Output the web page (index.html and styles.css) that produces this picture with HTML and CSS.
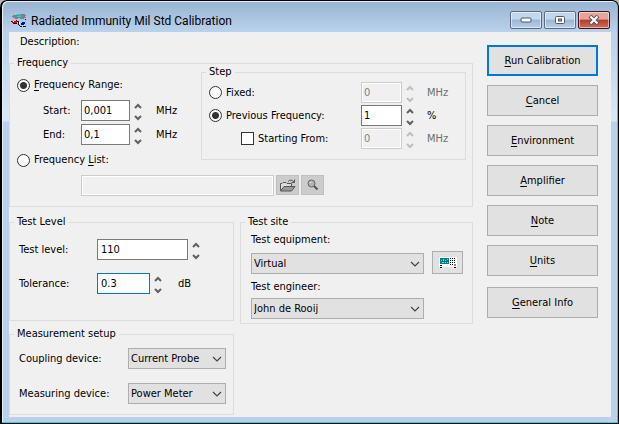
FILE: index.html
```html
<!DOCTYPE html>
<html lang="en">
<head>
  <meta charset="UTF-8">
  <meta name="viewport" content="width=device-width, initial-scale=1.0">
  <title>Radiated Immunity Mil Std Calibration</title>
  <link rel="stylesheet" href="styles.css">
</head>
<body>
  <svg class="defs" width="0" height="0" aria-hidden="true">
    <symbol id="up" viewBox="0 0 8 7"><path d="M1 5L4 2L7 5" fill="none" stroke="currentColor" stroke-width="2"/></symbol>
    <symbol id="down" viewBox="0 0 8 7"><path d="M1 2L4 5L7 2" fill="none" stroke="currentColor" stroke-width="2"/></symbol>
    <symbol id="chevron" viewBox="0 0 10 6"><path d="M1 1L5 5L9 1" fill="none" stroke="currentColor" stroke-width="1.2"/></symbol>
  </svg>

  <div class="window">
    <header class="titlebar">
      <svg class="app-icon" width="16" height="16" viewBox="0 0 16 16" shape-rendering="crispEdges" aria-hidden="true">
        <path d="M2 2h3v-1h9v1h1v1h-1v1h1v1h-2v1h-4v-1h-2v1h-3v-1h-2v-1h-1v-1h1z" fill="#808080"/>
        <path d="M5 1h4v1h-4zM9 2h1v2h-1zM6 3h3v1h-3z" fill="#00e5ee"/>
        <path d="M1 8h5v2h-5z" fill="#f00000"/>
        <path d="M0 8h1v1h-1zM5 7h1v1h-1zM6 8h2v1h-2zM7 9h1v3h-1zM8 12h1v1h-1zM2 10h4v1h-4zM9 13h2v1h-2zM12 13h3v1h-3zM14 6h1v1h-1z" fill="#101010"/>
        <path d="M10 10h1v-1h3v2h-1v1h-3z" fill="#0000f0"/>
        <path d="M2 8h1v1h-1zM8 9h1v2h-1z" fill="#ffffff"/>
      </svg>
      <h1>Radiated Immunity Mil Std Calibration</h1>
      <div class="caption">
        <button type="button" aria-label="Minimize">
          <svg width="12" height="6" viewBox="0 0 12 6"><rect x="1" y="1" width="10" height="4" rx="1" fill="#fff" stroke="#535666"/></svg>
        </button>
        <button type="button" aria-label="Maximize">
          <svg width="12" height="10" viewBox="0 0 12 10"><rect x="1.5" y="1.5" width="9" height="7" rx="1" fill="#fff" stroke="#535666"/><rect x="4.5" y="4" width="3" height="2" fill="#8fb0d0" stroke="#535666"/></svg>
        </button>
        <button type="button" class="close" aria-label="Close">
          <svg width="12" height="10" viewBox="0 0 12 10"><path d="M2 1L10 9M10 1L2 9" stroke="#535666" stroke-width="4"/><path d="M2.5 1.5L9.5 8.5M9.5 1.5L2.5 8.5" stroke="#fff" stroke-width="2"/></svg>
        </button>
      </div>
    </header>

    <form class="client">
      <div class="main">
        <p class="description">Description:</p>

        <fieldset class="group frequency">
          <legend>Frequency</legend>
          <div class="range">
            <label class="choice"><input type="radio" name="freq" checked><span><u>F</u>requency Range:</span></label>
            <div class="limits">
              <label for="start">Start:</label>
              <div class="spin">
                <input class="field" id="start" type="text" value="0,001">
                <span class="arrows">
                  <button type="button" aria-label="Start up"><svg><use href="#up"/></svg></button>
                  <button type="button" aria-label="Start down"><svg><use href="#down"/></svg></button>
                </span>
              </div>
              <span>MHz</span>
              <label for="end">End:</label>
              <div class="spin">
                <input class="field" id="end" type="text" value="0,1">
                <span class="arrows">
                  <button type="button" aria-label="End up"><svg><use href="#up"/></svg></button>
                  <button type="button" aria-label="End down"><svg><use href="#down"/></svg></button>
                </span>
              </div>
              <span>MHz</span>
            </div>
            <label class="choice"><input type="radio" name="freq"><span>Frequency <u>L</u>ist:</span></label>
          </div>

          <fieldset class="group step">
            <legend>Step</legend>
            <label class="choice"><input type="radio" name="step"><span>Fixed:</span></label>
            <div class="spin">
              <input class="field" type="text" value="0" aria-label="Fixed step" disabled>
              <span class="arrows">
                <button type="button" aria-label="Fixed up" disabled><svg><use href="#up"/></svg></button>
                <button type="button" aria-label="Fixed down" disabled><svg><use href="#down"/></svg></button>
              </span>
            </div>
            <span class="off">MHz</span>
            <label class="choice"><input type="radio" name="step" checked><span>Previous Frequency:</span></label>
            <div class="spin">
              <input class="field" type="text" value="1" aria-label="Previous frequency step">
              <span class="arrows">
                <button type="button" aria-label="Step up"><svg><use href="#up"/></svg></button>
                <button type="button" aria-label="Step down"><svg><use href="#down"/></svg></button>
              </span>
            </div>
            <span>%</span>
            <label class="choice sub"><input type="checkbox"><span>Starting From:</span></label>
            <div class="spin">
              <input class="field" type="text" value="0" aria-label="Starting from" disabled>
              <span class="arrows">
                <button type="button" aria-label="Starting from up" disabled><svg><use href="#up"/></svg></button>
                <button type="button" aria-label="Starting from down" disabled><svg><use href="#down"/></svg></button>
              </span>
            </div>
            <span class="off">MHz</span>
          </fieldset>

          <div class="file">
            <input class="field" type="text" aria-label="Frequency list file" disabled>
            <button type="button" class="tool" aria-label="Open" disabled>
              <svg width="17" height="13" viewBox="0 0 17 13"><path d="M1.5 11.5V4.5H3L4 3.5H7L8 4.5H12.5V7" fill="#ddd" stroke="#555"/><path d="M1.5 12L5 7.5H16L12.5 12z" fill="#999" stroke="#555"/><path d="M9 2.5Q12 -0.5 15 3M15.5 0.5V3.5H12.5" fill="none" stroke="#555"/></svg>
            </button>
            <button type="button" class="tool" aria-label="Search" disabled>
              <svg width="12" height="12" viewBox="0 0 12 12"><circle cx="4.5" cy="4.5" r="3.5" fill="#b4b4b4" stroke="#666"/><path d="M3 4Q3 3 4.5 3" fill="none" stroke="#eee"/><path d="M7 7L10.5 10.5" stroke="#555" stroke-width="2"/></svg>
            </button>
          </div>
        </fieldset>

        <div class="columns">
          <div class="column">
            <fieldset class="group level">
              <legend>Test Level</legend>
              <label for="level">Test level:</label>
              <div class="spin wide">
                <input class="field" id="level" type="text" value="110">
                <span class="arrows">
                  <button type="button" aria-label="Level up"><svg><use href="#up"/></svg></button>
                  <button type="button" aria-label="Level down"><svg><use href="#down"/></svg></button>
                </span>
              </div>
              <label for="tolerance">Tolerance:</label>
              <div class="spin">
                <input class="field active" id="tolerance" type="text" value="0.3">
                <span class="arrows">
                  <button type="button" aria-label="Tolerance up"><svg><use href="#up"/></svg></button>
                  <button type="button" aria-label="Tolerance down"><svg><use href="#down"/></svg></button>
                </span>
                <span class="unit">dB</span>
              </div>
            </fieldset>

            <fieldset class="group setup">
              <legend>Measurement setup</legend>
              <label for="coupling">Coupling device:</label>
              <div class="select"><select id="coupling"><option>Current Probe</option></select><svg><use href="#chevron"/></svg></div>
              <label for="measuring">Measuring device:</label>
              <div class="select"><select id="measuring"><option>Power Meter</option></select><svg><use href="#chevron"/></svg></div>
            </fieldset>
          </div>

          <fieldset class="group site">
            <legend>Test site</legend>
            <label for="equipment">Test equipment:</label>
            <div class="select"><select id="equipment"><option>Virtual</option></select><svg><use href="#chevron"/></svg></div>
            <button type="button" class="push device" aria-label="Equipment">
              <svg width="18" height="12" viewBox="0 0 18 12" shape-rendering="crispEdges">
                <path d="M0 0h18v10h-18z" fill="#fff"/>
                <path d="M1 1h9v6h-9z" fill="#008080"/>
                <path d="M2 3h1v1h-1zM4 2h1v2h-1zM6 3h1v1h-1zM8 2h1v1h-1zM3 5h2v1h-2zM6 5h1v1h-1zM8 5h1v1h-1z" fill="#00ffff"/>
                <path d="M11 1h1v1h-1zM13 1h1v1h-1zM15 1h1v1h-1zM11 3h1v1h-1zM13 3h1v1h-1zM15 3h1v1h-1zM11 5h1v1h-1zM13 5h1v1h-1zM15 5h1v1h-1zM11 7h1v1h-1zM13 7h1v1h-1zM1 10h2v1h-2zM15 10h2v1h-2z" fill="#000"/>
                <path d="M1 8h2v1h-2z" fill="#000080"/>
                <path d="M15 7h2v2h-2z" fill="#888"/>
              </svg>
            </button>
            <label for="engineer">Test engineer:</label>
            <div class="select"><select id="engineer"><option>John de Rooij</option></select><svg><use href="#chevron"/></svg></div>
          </fieldset>
        </div>
      </div>

      <div class="actions">
        <button type="button" class="push default"><u>R</u>un Calibration</button>
        <button type="button" class="push"><u>C</u>ancel</button>
        <button type="button" class="push"><u>E</u>nvironment</button>
        <button type="button" class="push"><u>A</u>mplifier</button>
        <button type="button" class="push"><u>N</u>ote</button>
        <button type="button" class="push"><u>U</u>nits</button>
        <button type="button" class="push last"><u>G</u>eneral Info</button>
      </div>
    </form>
  </div>
</body>
</html>
```

FILE: styles.css
```css
*{box-sizing:border-box;margin:0;padding:0;}
body{
  background:#b4b8b4;
  font:11px/16px Tahoma,"DejaVu Sans Condensed","Noto Sans",sans-serif;
  color:#000;
}
.defs{position:absolute;}
button,input,select{font:inherit;color:inherit;}
svg{display:block;}
u{text-underline-offset:2px;}

.window{
  min-height:100vh;
  display:flex;
  flex-direction:column;
  padding:1px 7px 6px;
  border:1px solid #000;
  border-radius:7px 7px 0 0;
  border-left-width:2px;
  box-shadow:inset -1px -1px #2fd0e6,inset 1px 1px #e4eef8;
  background:
    linear-gradient(#98b4d2,#b9d1ea 30px,#dbe8f6 120px,#b9d1ea 121px);
}

/* title bar */
.titlebar{
  display:flex;
  align-items:center;
  height:30px;
  padding:7px 1px 0 2px;
}
.titlebar h1{
  flex:1;
  margin-left:4px;
  font:12px/16px "Segoe UI",Roboto,"Open Sans",sans-serif;
}
.caption{display:flex;gap:2px;margin-bottom:2px;}
.caption button{
  display:flex;
  align-items:center;
  justify-content:center;
  width:32px;
  height:18px;
  border:1px solid #5b6b85;
  border-radius:2px;
  box-shadow:inset 0 0 0 1px rgba(255,255,255,.5);
  background:linear-gradient(#c2d6ec 45%,#98b6d6 50%,#b7d0ea);
}
.caption .close{
  border-color:#431422;
  background:linear-gradient(#e6a49a 45%,#b83a26 50%,#d0705a);
}

.client{
  flex:1;
  display:flex;
  gap:14px;
  padding-right:13px;
  background:#f0f0f0;
}
.main{flex:1;}
.description{padding:2px 11px 5px;}

/* group boxes */
.group{
  --inset:0px;
  min-width:0;
  padding-left:var(--inset);
  border:1px solid #dcdcdc;
}
.group > legend{margin-left:calc(4px - var(--inset));padding:0 3px;}
.choice{display:flex;align-items:center;gap:4px;}
.choice input{
  appearance:none;
  width:13px;
  height:13px;
  border:1px solid #333;
  background:#fff;
}
.choice input[type=radio]{border-radius:50%;}
.choice input[type=radio]:checked{background:radial-gradient(circle,#333 3px,#fff 4px);}

.field{
  min-width:0;
  height:21px;
  padding:0 2px;
  border:1px solid #7a7a7a;
  background:#fff;
}
.field.active{border-color:#0078d7;}
.field:disabled{
  border-color:#ccc;
  background:#f0f0f0;
  box-shadow:inset 0 0 0 1px #fff;
  color:#838383;
}
.off{color:#6d6d6d;}
.spin{display:flex;align-items:center;gap:4px;}
.arrows{display:flex;flex-direction:column;gap:4px;padding-top:2px;}
.arrows button{border:0;background:none;color:#606060;}
.arrows button:disabled{color:#bfbfbf;}
.arrows svg{width:8px;height:7px;}

.frequency{
  display:grid;
  grid-template-columns:191px 1fr;
  padding:0 6px 10px 0;
}
.range{display:flex;flex-direction:column;gap:7px;padding:6px 0 0 7px;}
.limits{
  display:grid;
  grid-template-columns:38px 75px 1fr;
  align-items:center;
  row-gap:3px;
  padding-left:26px;
}
.limits .field{width:49px;}
.step{
  --inset:7px;
  display:grid;
  grid-template-columns:152px 66px 1fr;
  align-items:center;
  row-gap:2px;
  margin-top:-7px;
  padding:2px 7px 10px;
  align-self:start;
}
.step .field{width:41px;}
.sub{padding-left:32px;}
.file{
  grid-column:1 / -1;
  display:flex;
  gap:2px;
  margin-top:7px;
  padding-left:71px;
}
.file .field{width:193px;}
.tool{
  display:flex;
  align-items:center;
  justify-content:center;
  width:23px;
  height:20px;
  border:1px solid #bfbfbf;
  background:#ccc;
}

.columns{display:grid;grid-template-columns:225px 1fr;gap:6px;align-items:start;margin-top:7px;}
.column{display:grid;gap:5px;}
.level{
  --inset:9px;
  display:grid;
  grid-template-columns:78px 1fr;
  align-items:center;
  row-gap:13px;
  padding:9px 9px 26px;
}
.level .field{width:53px;padding-left:3px;}
.level .wide .field{width:91px;}
.unit{margin-left:12px;}
.setup{
  --inset:9px;
  display:grid;
  grid-template-columns:1fr 98px;
  align-items:center;
  row-gap:14px;
  padding:6px 7px 10px 9px;
}
.site{
  --inset:10px;
  display:grid;
  grid-template-columns:1fr 31px;
  align-items:end;
  column-gap:8px;
  row-gap:3px;
  padding:0 9px 4px 10px;
}
.site label{grid-column:1 / -1;margin-top:2px;}

.select{position:relative;}
.select select{
  display:block;
  appearance:none;
  width:100%;
  height:21px;
  padding:0 2px;
  border:1px solid #adadad;
  background:#e1e1e1;
}
.select svg{
  position:absolute;
  right:4px;
  top:8px;
  width:10px;
  height:6px;
  color:#444;
  pointer-events:none;
}

/* push buttons */
.push{
  display:block;
  border:1px solid #adadad;
  background:#e1e1e1;
}
.device{
  display:flex;
  align-items:center;
  justify-content:center;
  height:23px;
}
.actions{
  display:flex;
  flex-direction:column;
  gap:9px;
  width:111px;
  padding-top:13px;
}
.actions .push{height:31px;}
.actions .default{border:2px solid #0078d7;}
.actions .last{margin-top:2px;}
```
